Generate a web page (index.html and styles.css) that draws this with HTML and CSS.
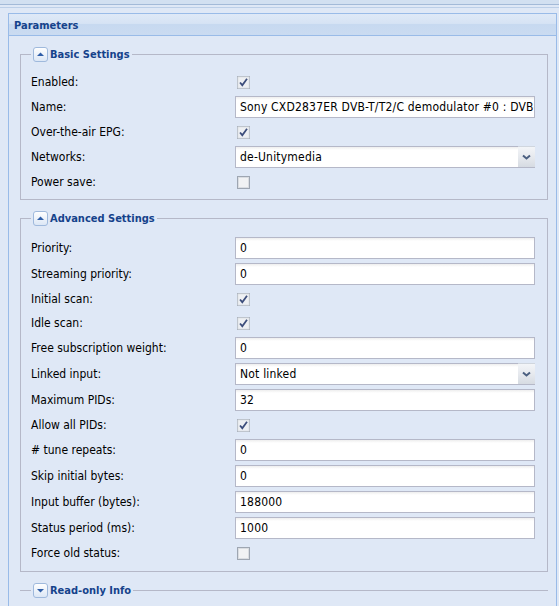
FILE: index.html
```html
<!DOCTYPE html>
<html>
<head>
<meta charset="utf-8">
<link rel="stylesheet" href="styles.css">
</head>
<body>
<div class="topbar"></div>
<div class="topline"></div>
<div class="panel">
  <div class="panel-header"><span class="panel-title">Parameters</span></div>
  <div class="panel-body">
    <fieldset class="fs basic">
      <legend><span class="tool"><svg width="15" height="15" viewBox="0 0 15 15"><defs><linearGradient id="tg" x1="0" y1="0" x2="0" y2="1"><stop offset="0" stop-color="#ffffff"/><stop offset="1" stop-color="#dbe6f5"/></linearGradient></defs><rect x="0.5" y="0.5" width="14" height="14" rx="2.5" fill="url(#tg)" stroke="#9fb9dc"/><path d="M4 9 L7.5 5.5 L11 9 Z" fill="#2f5ea8"/></svg></span><span class="lt">Basic Settings</span></legend>
      <div class="row cbrow"><label>Enabled:</label><span class="check"><svg width="13" height="13" viewBox="0 0 13 13"><rect x="0.5" y="0.5" width="12" height="12" fill="#eef0f3" stroke="#9ea6b2"/><rect x="1" y="1" width="11" height="11" fill="none" stroke="#dfe3e8"/><path d="M3 6.5 L5.3 9.2 L10 2.8" fill="none" stroke="#3d4e7c" stroke-width="1.8"/></svg></span></div>
      <div class="row"><label>Name:</label><div class="text">Sony CXD2837ER DVB-T/T2/C demodulator #0 : DVB-T #0</div></div>
      <div class="row cbrow"><label>Over-the-air EPG:</label><span class="check"><svg width="13" height="13" viewBox="0 0 13 13"><rect x="0.5" y="0.5" width="12" height="12" fill="#eef0f3" stroke="#9ea6b2"/><rect x="1" y="1" width="11" height="11" fill="none" stroke="#dfe3e8"/><path d="M3 6.5 L5.3 9.2 L10 2.8" fill="none" stroke="#3d4e7c" stroke-width="1.8"/></svg></span></div>
      <div class="row"><label>Networks:</label><div class="combo"><div class="combo-text">de-Unitymedia</div><div class="trigger"><svg width="17" height="20" viewBox="0 0 17 20"><path d="M5 8.5 L8.5 11.5 L12 8.5" fill="none" stroke="#4b5f80" stroke-width="2"/></svg></div></div></div>
      <div class="row cbrow"><label>Power save:</label><span class="check"><svg width="13" height="13" viewBox="0 0 13 13"><rect x="0.5" y="0.5" width="12" height="12" fill="#e9ebee" stroke="#9ea6b2"/><rect x="1.5" y="1.5" width="10" height="10" fill="#f1f2f4" stroke="#dadde2"/></svg></span></div>
    </fieldset>

    <fieldset class="fs advanced">
      <legend><span class="tool"><svg width="15" height="15" viewBox="0 0 15 15"><defs><linearGradient id="tg2" x1="0" y1="0" x2="0" y2="1"><stop offset="0" stop-color="#ffffff"/><stop offset="1" stop-color="#dbe6f5"/></linearGradient></defs><rect x="0.5" y="0.5" width="14" height="14" rx="2.5" fill="url(#tg2)" stroke="#9fb9dc"/><path d="M4 9 L7.5 5.5 L11 9 Z" fill="#2f5ea8"/></svg></span><span class="lt">Advanced Settings</span></legend>
      <div class="row"><label>Priority:</label><div class="text">0</div></div>
      <div class="row"><label>Streaming priority:</label><div class="text">0</div></div>
      <div class="row cbrow"><label>Initial scan:</label><span class="check"><svg width="13" height="13" viewBox="0 0 13 13"><rect x="0.5" y="0.5" width="12" height="12" fill="#eef0f3" stroke="#9ea6b2"/><rect x="1" y="1" width="11" height="11" fill="none" stroke="#dfe3e8"/><path d="M3 6.5 L5.3 9.2 L10 2.8" fill="none" stroke="#3d4e7c" stroke-width="1.8"/></svg></span></div>
      <div class="row cbrow"><label>Idle scan:</label><span class="check"><svg width="13" height="13" viewBox="0 0 13 13"><rect x="0.5" y="0.5" width="12" height="12" fill="#eef0f3" stroke="#9ea6b2"/><rect x="1" y="1" width="11" height="11" fill="none" stroke="#dfe3e8"/><path d="M3 6.5 L5.3 9.2 L10 2.8" fill="none" stroke="#3d4e7c" stroke-width="1.8"/></svg></span></div>
      <div class="row"><label>Free subscription weight:</label><div class="text">0</div></div>
      <div class="row"><label>Linked input:</label><div class="combo"><div class="combo-text">Not linked</div><div class="trigger"><svg width="17" height="20" viewBox="0 0 17 20"><path d="M5 8.5 L8.5 11.5 L12 8.5" fill="none" stroke="#4b5f80" stroke-width="2"/></svg></div></div></div>
      <div class="row"><label>Maximum PIDs:</label><div class="text">32</div></div>
      <div class="row cbrow"><label>Allow all PIDs:</label><span class="check"><svg width="13" height="13" viewBox="0 0 13 13"><rect x="0.5" y="0.5" width="12" height="12" fill="#eef0f3" stroke="#9ea6b2"/><rect x="1" y="1" width="11" height="11" fill="none" stroke="#dfe3e8"/><path d="M3 6.5 L5.3 9.2 L10 2.8" fill="none" stroke="#3d4e7c" stroke-width="1.8"/></svg></span></div>
      <div class="row"><label># tune repeats:</label><div class="text">0</div></div>
      <div class="row"><label>Skip initial bytes:</label><div class="text">0</div></div>
      <div class="row"><label>Input buffer (bytes):</label><div class="text">188000</div></div>
      <div class="row"><label>Status period (ms):</label><div class="text">1000</div></div>
      <div class="row cbrow"><label>Force old status:</label><span class="check"><svg width="13" height="13" viewBox="0 0 13 13"><rect x="0.5" y="0.5" width="12" height="12" fill="#e9ebee" stroke="#9ea6b2"/><rect x="1.5" y="1.5" width="10" height="10" fill="#f1f2f4" stroke="#dadde2"/></svg></span></div>
    </fieldset>

    <fieldset class="fs collapsed">
      <legend><span class="tool"><svg width="15" height="15" viewBox="0 0 15 15"><defs><linearGradient id="tg3" x1="0" y1="0" x2="0" y2="1"><stop offset="0" stop-color="#ffffff"/><stop offset="1" stop-color="#dbe6f5"/></linearGradient></defs><rect x="0.5" y="0.5" width="14" height="14" rx="2.5" fill="url(#tg3)" stroke="#9fb9dc"/><path d="M4 6 L7.5 9.5 L11 6 Z" fill="#2f5ea8"/></svg></span><span class="lt">Read-only Info</span></legend>
    </fieldset>
  </div>
</div>
</body>
</html>
```

FILE: styles.css
```css
html, body {
  margin: 0;
  padding: 0;
  background: #dfe8f6;
  overflow: hidden;
}

body {
  font-family: "DejaVu Sans Condensed", "DejaVu Sans", sans-serif;
  font-stretch: condensed;
  font-size: 12px;
  color: #000;
}

.topbar {
  height: 4px;
  background: #d2e0f1;
  border-bottom: 1px solid #a3bad8;
}

.topline {
  height: 1px;
  margin-top: 2px;
  background: #bccfe8;
}

.panel {
  margin: 5px 0 0 8px;
  width: 549px;
  box-sizing: border-box;
  border: 1px solid #99bbe8;
  border-bottom: none;
  height: 600px;
}

.panel-header {
  height: 22px;
  box-sizing: border-box;
  border-bottom: 1px solid #99bbe8;
  background: linear-gradient(to bottom, #dfe9f7 0%, #d6e3f4 45%, #c7d9f0 50%, #cadbf1 100%);
  display: flex;
  align-items: center;
  padding-left: 5px;
  padding-top: 1px;
}

.panel-title {
  font-weight: bold;
  font-size: 11px;
  color: #15428b;
}

.panel-body {
  padding: 10px 8px 0 11px;
}

.fs {
  margin: 0 0 10px 0;
  padding: 10px 12px 5px 10px;
  border: 1px solid #b5b8c8;
  min-width: 0;
}

.fs.basic {
  padding-bottom: 3px;
}

.fs.advanced {
  padding-top: 11px;
  padding-bottom: 4px;
}

.fs legend {
  padding: 0 2px;
  display: flex;
  align-items: center;
  height: 16px;
}

.tool {
  display: block;
  width: 15px;
  height: 15px;
}

.tool svg {
  display: block;
}

.lt {
  margin-left: 2px;
  font-weight: bold;
  font-size: 11px;
  color: #15428b;
  line-height: 15px;
}

.fs.collapsed {
  border-width: 1px 0 0 0;
  padding: 0 12px 0 11px;
}

.row {
  display: flex;
  align-items: center;
  height: 22px;
  margin-bottom: 4px;
}

.row.cbrow {
  height: 20px;
}

.row label {
  width: 204px;
  flex: none;
}

.check {
  display: block;
  width: 13px;
  height: 13px;
  margin-left: 2px;
}

.check svg {
  display: block;
}

.text {
  flex: 1;
  height: 22px;
  box-sizing: border-box;
  border: 1px solid #b5b8c8;
  background: linear-gradient(to bottom, #eeeeee 0, #ffffff 3px, #ffffff 100%);
  padding: 0 4px;
  line-height: 20px;
  letter-spacing: 0.2px;
  white-space: nowrap;
  overflow: hidden;
}

.combo {
  flex: 1;
  display: flex;
  height: 22px;
  box-sizing: border-box;
}

.combo-text {
  flex: 1;
  box-sizing: border-box;
  border: 1px solid #b5b8c8;
  border-right: none;
  background: linear-gradient(to bottom, #eeeeee 0, #ffffff 3px, #ffffff 100%);
  padding: 0 4px;
  line-height: 20px;
  letter-spacing: 0.2px;
  white-space: nowrap;
  overflow: hidden;
}

.trigger {
  width: 17px;
  flex: none;
  box-sizing: border-box;
  border-bottom: 1px solid #b5b8c8;
  border-top: 1px solid #d0d6de;
  background: linear-gradient(to bottom, #f3f5f8 0%, #e6e9ee 50%, #d6dbe2 100%);
}

.trigger svg {
  display: block;
}
```
